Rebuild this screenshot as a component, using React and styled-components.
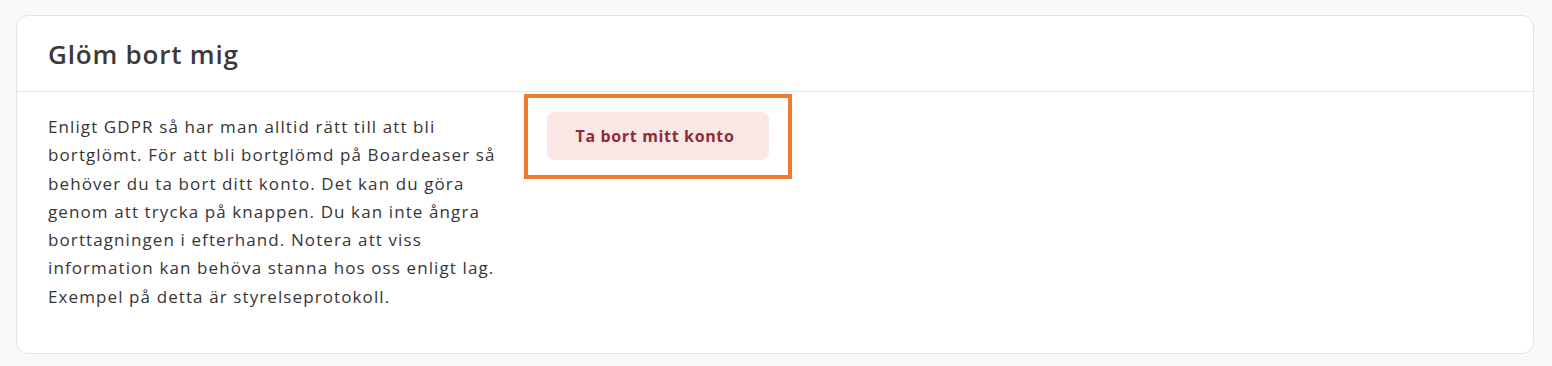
import React from 'react'
import styled, { createGlobalStyle } from 'styled-components'

const GlobalStyle = createGlobalStyle`
  html, body {
    margin: 0;
    padding: 0;
    background: #f9f9f9;
  }
  body {
    font-family: "Open Sans", Lato, sans-serif;
    color: #363636;
  }
`

const Page = styled.div`
  padding: 15px 18px 14px 16px;
`

const Card = styled.section`
  background: #ffffff;
  border: 1px solid #e4e4e4;
  border-radius: 12px;
  box-sizing: border-box;
`

const CardHeader = styled.header`
  height: 75px;
  display: flex;
  align-items: center;
  padding: 0 31px;
  border-bottom: 1px solid #e6e6e6;
`

const Title = styled.h2`
  margin: 0;
  font-size: 26px;
  font-weight: 600;
  letter-spacing: 0.8px;
  color: #3a3a3a;
`

const CardBody = styled.div`
  display: flex;
  align-items: flex-start;
  gap: 15px;
  padding: 2px 31px 42px;
`

const Description = styled.p`
  margin: 19px 0 0;
  width: 461px;
  font-size: 17px;
  letter-spacing: 1.1px;
  line-height: 28.3px;
  color: #363636;
`

const Highlight = styled.div`
  border: 4px solid ${({ color }) => color};
  padding: 14px 19px 15px;
`

const DangerButton = styled.button`
  width: 222px;
  height: 48px;
  padding: 0 6px 0 0;
  border: none;
  border-radius: 8px;
  background: #fbe6e6;
  color: #8e2c36;
  font-family: inherit;
  font-size: 16px;
  font-weight: 700;
  letter-spacing: 0.65px;
  cursor: pointer;
`

export default function App() {
  return (
    <>
      <GlobalStyle />
      <Page>
        <Card>
          <CardHeader>
            <Title>Glöm bort mig</Title>
          </CardHeader>
          <CardBody>
            <Description>
              Enligt GDPR så har man alltid rätt till att bli bortglömt. För att bli bortglömd på Boardeaser så
              behöver du ta bort ditt konto. Det kan du göra genom att trycka på knappen. Du kan inte ångra
              borttagningen i efterhand. Notera att viss information kan behöva stanna hos oss enligt lag.
              Exempel på detta är styrelseprotokoll.
            </Description>
            <Highlight color="#f07a30">
              <DangerButton>Ta bort mitt konto</DangerButton>
            </Highlight>
          </CardBody>
        </Card>
      </Page>
    </>
  )
}
